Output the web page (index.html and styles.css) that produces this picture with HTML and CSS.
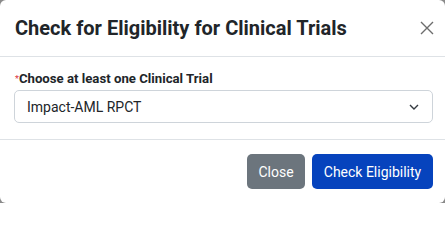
FILE: index.html
```html
<!DOCTYPE html>
<html>
<head>
<meta charset="utf-8">
<link rel="stylesheet" href="styles.css">
</head>
<body>
<div class="modal">
  <div class="modal-header">
    <h5 class="modal-title">Check for Eligibility for Clinical Trials</h5>
    <button class="btn-close" aria-label="Close">
      <svg width="14" height="14" viewBox="0 0 14 14"><path d="M1 1L13 13M13 1L1 13" stroke="#6d6d6d" stroke-width="1.4" fill="none"/></svg>
    </button>
  </div>
  <div class="modal-body">
    <label class="form-label"><span class="req">*</span>Choose at least one Clinical Trial</label>
    <div class="select">
      <span>Impact-AML RPCT</span>
      <svg width="10" height="6" viewBox="0 0 10 6"><path d="M1 1L5 5L9 1" stroke="#343a40" stroke-width="1.4" fill="none"/></svg>
    </div>
  </div>
  <div class="modal-footer">
    <button class="btn btn-secondary">Close</button>
    <button class="btn btn-primary">Check Eligibility</button>
  </div>
</div>
</body>
</html>
```
FILE: styles.css
```css
* { box-sizing: border-box; }
html { background: #fff; }
html, body { margin: 0; padding: 0; }
body {
  background: #8a8a8a;
  font-family: Roboto, "Noto Sans", sans-serif;
  color: #212529;
  width: 445px;
  height: 203px;
  overflow: hidden;
}
.modal {
  background: #fff;
  border-radius: 6px;
  width: 445px;
  height: 203px;
  display: flex;
  flex-direction: column;
}
.modal-header {
  display: flex;
  align-items: center;
  justify-content: space-between;
  height: 57px;
  padding: 0 10px 0 15px;
  border-bottom: 1px solid #dee2e6;
}
.modal-title {
  margin: 0;
  font-size: 20px;
  font-weight: 700;
  line-height: 1.5;
  color: #212529;
}
.btn-close {
  background: none;
  border: 0;
  padding: 0;
  width: 16px;
  height: 16px;
  display: flex;
  align-items: center;
  justify-content: center;
}
.modal-body {
  padding: 13px 12px 15px 14px;
  border-bottom: 1px solid #dee2e6;
  height: 83px;
}
.form-label {
  display: block;
  font-size: 13.2px;
  font-weight: 700;
  line-height: 18px;
  margin-bottom: 2px;
  padding-left: 1px;
}
.req {
  color: #dc3545;
  font-size: 9px;
  vertical-align: top;
  font-weight: 400;
}
.select {
  display: flex;
  align-items: center;
  justify-content: space-between;
  height: 33px;
  border: 1px solid #ced4da;
  border-radius: 5px;
  padding: 0 13px 0 12px;
  font-size: 14px;
}
.modal-footer {
  display: flex;
  justify-content: flex-end;
  align-items: center;
  gap: 7px;
  padding: 14px 12px 0 0;
}
.btn {
  border: 0;
  border-radius: 5px;
  color: #fff;
  font-family: inherit;
  font-size: 14px;
  height: 35px;
  padding: 0;
  white-space: nowrap;
}
.btn-secondary { background: #6c757d; width: 58px; }
.btn-primary { background: #0643bd; width: 121px; }
```
